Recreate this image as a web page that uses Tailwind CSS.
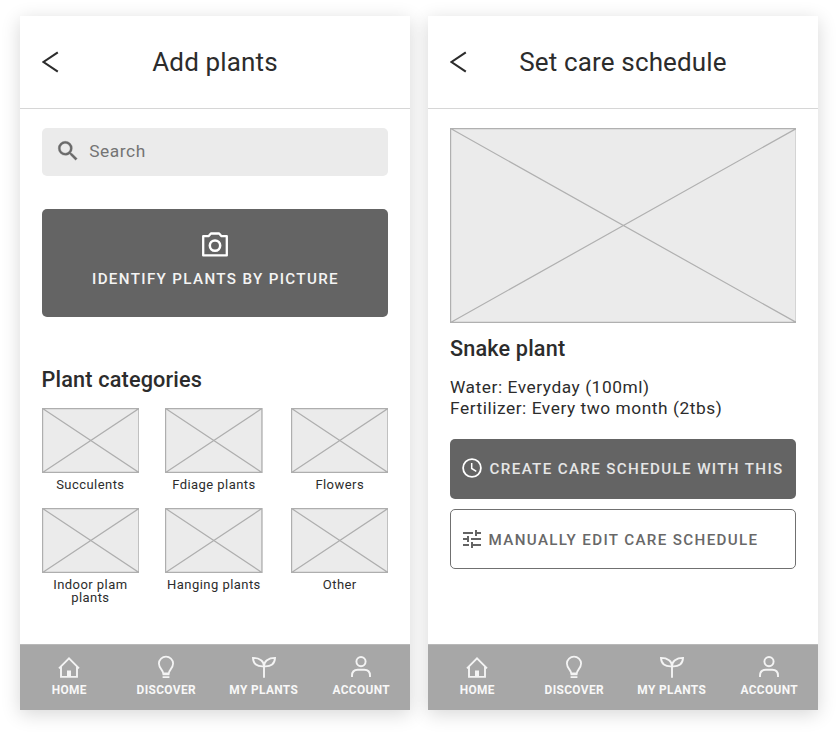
<!DOCTYPE html>
<html lang="en">
<head>
<meta charset="utf-8">
<title>Plant care wireframes</title>
<script src="https://cdn.jsdelivr.net/npm/@tailwindcss/browser@4"></script>
</head>
<body class="min-h-screen bg-white font-['Roboto',sans-serif] text-[#2c2c2c]">
<svg class="hidden">
  <symbol id="back" viewBox="0 0 18 22"><path d="M15.8 1.3 1.5 11l14.3 9.7" fill="none" stroke="#2c2c2c" stroke-width="2.1"/></symbol>
  <symbol id="home" viewBox="0 0 22 24" fill="none" stroke="#f4f4f4" stroke-width="1.9"><path d="M1 13.4 11 3.4l10 10"/><path d="M3 11.6v10.3h16V11.6"/><path d="M9 22v-6.5h4V22" fill="#f4f4f4" stroke="none"/></symbol>
  <symbol id="bulb" viewBox="0 0 24 24" fill="none" stroke="#f4f4f4" stroke-width="1.8"><path d="M9.3 18.4c0-3-4.4-5.1-4.4-9.9A7.1 7.1 0 0 1 12 1.6a7.1 7.1 0 0 1 7.1 6.9c0 4.8-4.4 6.9-4.4 9.9z"/><path d="M8.6 22.2h6.8M8.6 19.3h6.8" stroke-width="1.8"/></symbol>
  <symbol id="sprout" viewBox="0 0 26 24" fill="none" stroke="#f4f4f4" stroke-width="1.9"><path d="M13 22.8V11C13 6.3 8.8 2.9 2 2.9c.2 6 3.9 8.9 11 8.4M13 11.3c7.1.5 10.8-2.4 11-8.4C17.2 2.9 13 6.3 13 11"/></symbol>
  <symbol id="person" viewBox="0 0 24 24" fill="none" stroke="#f4f4f4" stroke-width="1.9"><circle cx="12" cy="6.6" r="4.6"/><path d="M3 21.9v-1.3c0-3.6 2.3-5.9 5.8-5.9h6.4c3.5 0 5.8 2.3 5.8 5.9v1.3"/></symbol>
</svg>
<main class="flex min-h-[734px] items-start gap-[18px] pl-5 pt-4">

  <section class="flex h-[693.5px] w-[390px] flex-col bg-white shadow-[0_4px_18px_rgba(0,0,0,0.16)]">
    <header class="flex h-[93px] shrink-0 items-center border-b border-[#d6d6d6] pl-[22px]">
      <svg class="h-[22px] w-[18px]"><use href="#back"/></svg>
      <h1 class="w-[310px] text-center text-[26px] leading-[30px] tracking-[0.15px]">Add plants</h1>
    </header>
    <div class="flex grow flex-col px-[21.6px] pt-[18.5px]">
      <div class="flex h-[48.75px] items-center rounded-[5px] bg-[#ebebeb] pl-[13px] text-[17.33px] tracking-[0.54px] text-[#747474]">
        <svg class="mr-2 -mt-px h-[26px] w-[26px] fill-[#6a6a6a] stroke-[#6a6a6a] stroke-[0.3]" viewBox="0 0 24 24"><path d="M15.5 14h-.79l-.28-.27A6.47 6.47 0 0 0 16 9.5 6.5 6.5 0 1 0 9.5 16c1.61 0 3.09-.59 4.23-1.57l.27.28v.79l5 4.99L20.49 19l-4.99-5zm-6 0C7.01 14 5 11.99 5 9.5S7.01 5 9.5 5 14 7.01 14 9.5 11.99 14 9.5 14z"/></svg>
        <span class="pl-[0.7px]">Search</span>
      </div>
      <button class="mt-[32.5px] flex h-[108.3px] flex-col items-center rounded-[5px] bg-[#646464] pt-[21px] text-[15.17px] leading-[18px] font-medium tracking-[1.35px] text-[#f4f4f4]">
        <svg class="h-[30px] w-[30px]" viewBox="0 0 30 30" fill="none" stroke="#fff"><path d="M3.2 6.2h5.3l2.4-2.7h8.2l2.4 2.7h5.3v19.2H3.2z" stroke-width="2.3" stroke-linejoin="round"/><circle cx="15" cy="15.6" r="5.2" stroke-width="2.5"/></svg>
        <span class="mt-[10px] pl-px">IDENTIFY PLANTS BY PICTURE</span>
      </button>
      <h2 class="mt-[50px] text-[21.67px] leading-[26px] font-medium tracking-[0.16px]">Plant categories</h2>
      <div class="mt-[15px] grid grid-cols-[123.6px_125.8px_97.5px] grid-rows-[100px_100px] text-center text-[13px] leading-[13px] tracking-[0.45px]">
        <figure class="w-[97.5px]"><svg class="block h-[65px] w-[97.5px] bg-[#ebebeb] stroke-[#aeaeae]" viewBox="0 0 97.5 65" fill="none"><path d="M.6.6h96.3v63.8H.6zl96.3 63.8M.6 64.4 96.9.6" stroke-width="1.2"/></svg><figcaption class="mt-[5px]">Succulents</figcaption></figure>
        <figure class="w-[97.5px]"><svg class="block h-[65px] w-[97.5px] bg-[#ebebeb] stroke-[#aeaeae]" viewBox="0 0 97.5 65" fill="none"><path d="M.6.6h96.3v63.8H.6zl96.3 63.8M.6 64.4 96.9.6" stroke-width="1.2"/></svg><figcaption class="mt-[5px]">Fdiage plants</figcaption></figure>
        <figure class="w-[97.5px]"><svg class="block h-[65px] w-[97.5px] bg-[#ebebeb] stroke-[#aeaeae]" viewBox="0 0 97.5 65" fill="none"><path d="M.6.6h96.3v63.8H.6zl96.3 63.8M.6 64.4 96.9.6" stroke-width="1.2"/></svg><figcaption class="mt-[5px]">Flowers</figcaption></figure>
        <figure class="w-[97.5px]"><svg class="block h-[65px] w-[97.5px] bg-[#ebebeb] stroke-[#aeaeae]" viewBox="0 0 97.5 65" fill="none"><path d="M.6.6h96.3v63.8H.6zl96.3 63.8M.6 64.4 96.9.6" stroke-width="1.2"/></svg><figcaption class="mt-[5px]">Indoor plam<br>plants</figcaption></figure>
        <figure class="w-[97.5px]"><svg class="block h-[65px] w-[97.5px] bg-[#ebebeb] stroke-[#aeaeae]" viewBox="0 0 97.5 65" fill="none"><path d="M.6.6h96.3v63.8H.6zl96.3 63.8M.6 64.4 96.9.6" stroke-width="1.2"/></svg><figcaption class="mt-[5px] whitespace-nowrap">Hanging plants</figcaption></figure>
        <figure class="w-[97.5px]"><svg class="block h-[65px] w-[97.5px] bg-[#ebebeb] stroke-[#aeaeae]" viewBox="0 0 97.5 65" fill="none"><path d="M.6.6h96.3v63.8H.6zl96.3 63.8M.6 64.4 96.9.6" stroke-width="1.2"/></svg><figcaption class="mt-[5px]">Other</figcaption></figure>
      </div>
    </div>
    <nav class="grid h-[65.5px] shrink-0 grid-cols-4 border-t border-[#b8b8b8] bg-[#a7a7a7] pt-[10px] text-center text-[11.9px] leading-[14px] font-bold tracking-[0.36px] text-[#f8f8f8]">
      <a class="flex flex-col items-center gap-1"><svg class="h-6 w-[22px]"><use href="#home"/></svg><span class="pl-px">HOME</span></a>
      <a class="flex flex-col items-center gap-1"><svg class="h-6 w-6"><use href="#bulb"/></svg>DISCOVER</a>
      <a class="flex flex-col items-center gap-1"><svg class="h-6 w-[26px]"><use href="#sprout"/></svg>MY PLANTS</a>
      <a class="flex flex-col items-center gap-1"><svg class="h-6 w-6"><use href="#person"/></svg>ACCOUNT</a>
    </nav>
  </section>

  <section class="flex h-[693.5px] w-[390px] flex-col bg-white shadow-[0_4px_18px_rgba(0,0,0,0.16)]">
    <header class="flex h-[93px] shrink-0 items-center border-b border-[#d6d6d6] pl-[22px]">
      <svg class="h-[22px] w-[18px]"><use href="#back"/></svg>
      <h1 class="w-[310px] text-center text-[26px] leading-[30px] tracking-[0.15px]">Set care schedule</h1>
    </header>
    <div class="flex grow flex-col px-[21.6px] pt-[18.5px]">
      <svg class="block h-[195px] w-full bg-[#ebebeb] stroke-[#b0b0b0]" viewBox="0 0 346.8 195" fill="none"><path d="M.6.6h345.6v193.8H.6zl345.6 193.8M.6 194.4 346.2 .6" stroke-width="1.2"/></svg>
      <h2 class="mt-[13.3px] pl-[0.4px] text-[21.67px] leading-[26px] font-medium tracking-[0.16px]">Snake plant</h2>
      <p class="mt-[15px] pl-[0.4px] text-[17.33px] leading-[21.67px] tracking-[0.54px]">Water: Everyday (100ml)<br>Fertilizer: Every two month (2tbs)</p>
      <button class="mt-[18.8px] flex h-[59.6px] shrink-0 items-center rounded-[5px] bg-[#646464] pl-3 text-[15.17px] font-medium tracking-[1.35px] text-[#e6e6e6]">
        <svg class="mr-2 -mt-px h-5 w-5" viewBox="0 0 20 20" fill="none" stroke="#fff"><circle cx="10" cy="10" r="8.9" stroke-width="1.8"/><path d="M9.7 5v5.5l4.6 2.8" stroke-width="1.5"/></svg>
        <span class="mt-px">CREATE CARE SCHEDULE WITH THIS</span>
      </button>
      <button class="mt-[10.8px] flex h-[59.6px] shrink-0 items-center rounded-[5px] border border-[#707070] pl-3 text-[15.17px] font-medium tracking-[1.35px] text-[#686868]">
        <svg class="mr-2 h-[18px] w-[18px] fill-[#646464]" viewBox="3 3 18 18"><path d="M3 17v2h6v-2H3zM3 5v2h10V5H3zm10 16v-2h8v-2h-8v-2h-2v6h2zM7 9v2H3v2h4v2h2V9H7zm14 4v-2H11v2h10zm-6-4h2V7h4V5h-4V3h-2v6z"/></svg>
        <span class="mt-0.5">MANUALLY EDIT CARE SCHEDULE</span>
      </button>
    </div>
    <nav class="grid h-[65.5px] shrink-0 grid-cols-4 border-t border-[#b8b8b8] bg-[#a7a7a7] pt-[10px] text-center text-[11.9px] leading-[14px] font-bold tracking-[0.36px] text-[#f8f8f8]">
      <a class="flex flex-col items-center gap-1"><svg class="h-6 w-[22px]"><use href="#home"/></svg><span class="pl-px">HOME</span></a>
      <a class="flex flex-col items-center gap-1"><svg class="h-6 w-6"><use href="#bulb"/></svg>DISCOVER</a>
      <a class="flex flex-col items-center gap-1"><svg class="h-6 w-[26px]"><use href="#sprout"/></svg>MY PLANTS</a>
      <a class="flex flex-col items-center gap-1"><svg class="h-6 w-6"><use href="#person"/></svg>ACCOUNT</a>
    </nav>
  </section>
</main>
</body>
</html>
